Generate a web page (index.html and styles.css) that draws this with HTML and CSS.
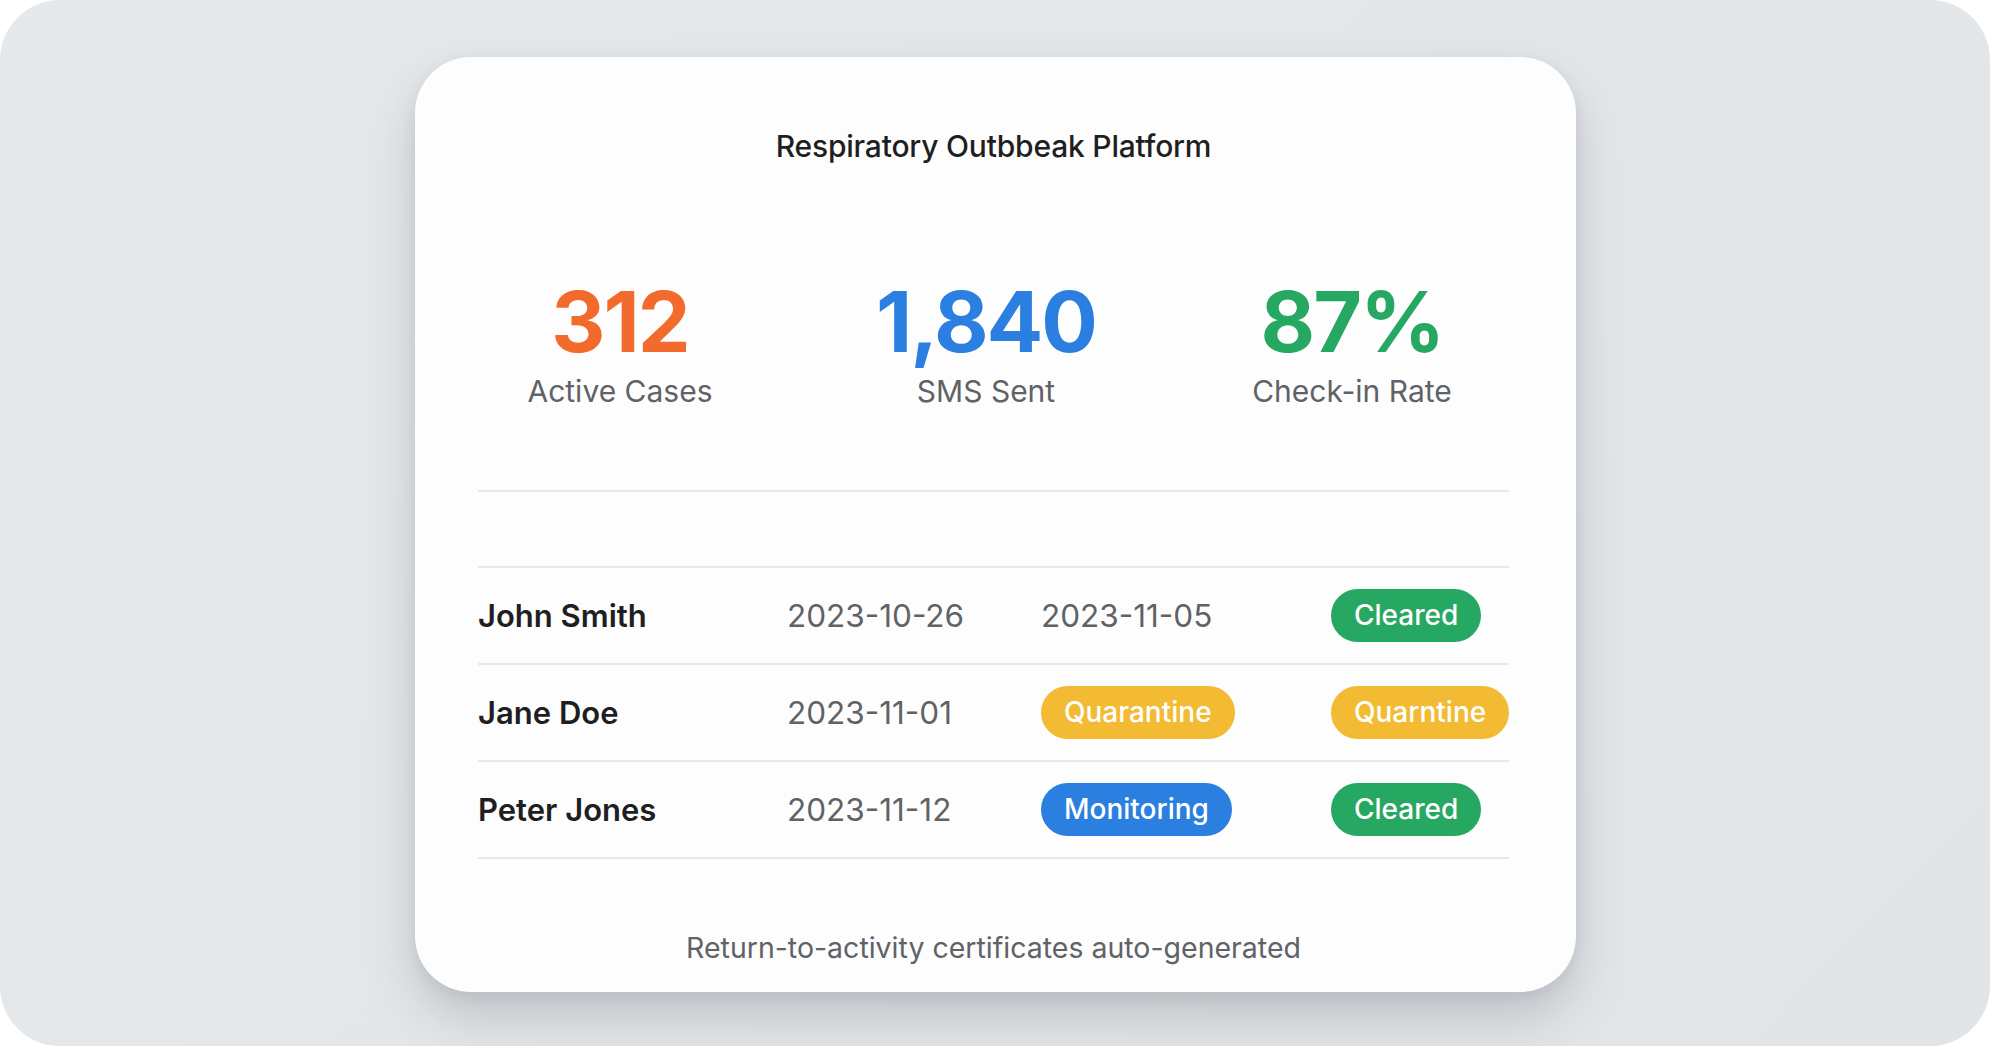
FILE: index.html
```html
<!DOCTYPE html>
<html lang="en">
<head>
    <meta charset="UTF-8">
    <meta name="viewport" content="width=device-width, initial-scale=1.0">
    <title>Respiratory Outbreak Platform</title>
    <link rel="stylesheet" href="styles.css">
</head>
<body>
    <div class="frame">
        <div class="card">
            <h1 class="title">Respiratory Outbbeak Platform</h1>

            <div class="stats">
                <div class="stat">
                    <div class="stat-value orange">312</div>
                    <div class="stat-label">Active Cases</div>
                </div>
                <div class="stat">
                    <div class="stat-value blue">1,840</div>
                    <div class="stat-label">SMS Sent</div>
                </div>
                <div class="stat">
                    <div class="stat-value green">87%</div>
                    <div class="stat-label">Check-in Rate</div>
                </div>
            </div>

            <div class="table">
                <div class="row head"></div>
                <div class="row">
                    <div class="name">John Smith</div>
                    <div class="date">2023-10-26</div>
                    <div class="date">2023-11-05</div>
                    <div><span class="pill pill-green">Cleared</span></div>
                </div>
                <div class="row">
                    <div class="name">Jane Doe</div>
                    <div class="date">2023-11-01</div>
                    <div><span class="pill pill-yellow">Quarantine</span></div>
                    <div><span class="pill pill-yellow">Quarntine</span></div>
                </div>
                <div class="row">
                    <div class="name">Peter Jones</div>
                    <div class="date">2023-11-12</div>
                    <div><span class="pill pill-blue">Monitoring</span></div>
                    <div><span class="pill pill-green">Cleared</span></div>
                </div>
            </div>

            <p class="footnote">Return-to-activity certificates auto-generated</p>
        </div>
    </div>
</body>
</html>
```

FILE: styles.css
```css
:root {
    --frame-bg: #e3e6e9;
    --card-bg: #fdfdfd;
    --text-dark: #1f1f22;
    --text-muted: #5f6266;
    --line-color: #e6e8eb;
    --orange: #f26b2c;
    --blue: #2b7fe0;
    --green: #27a862;
    --yellow: #f2bb33;
}

body {
    margin: 0;
    background: #ffffff;
    font-family: 'Inter', 'Roboto', sans-serif;
    color: var(--text-dark);
}

.frame {
    width: 1990px;
    height: 1046px;
    box-sizing: border-box;
    border-radius: 60px;
    background: linear-gradient(135deg, #e6e9eb 0%, #e2e5e8 100%);
    display: flex;
    justify-content: center;
    align-items: flex-start;
    padding-top: 57px;
    padding-left: 1px;
}

.card {
    width: 1161px;
    height: 935px;
    box-sizing: border-box;
    background: var(--card-bg);
    border-radius: 56px;
    box-shadow: 0 26px 50px rgba(60, 70, 80, 0.22), 0 4px 14px rgba(60, 70, 80, 0.08);
    padding: 72px 67px 0 63px;
    display: flex;
    flex-direction: column;
}

.title {
    margin: 0;
    text-align: center;
    font-size: 30px;
    line-height: 34px;
    font-weight: 500;
    color: var(--text-dark);
    letter-spacing: -0.2px;
}

.stats {
    display: grid;
    grid-template-columns: repeat(3, 366px);
    margin: 117px 0 0 -41px;
}

.stat {
    text-align: center;
}

.stat-value {
    font-size: 84px;
    line-height: 84px;
    font-weight: 700;
    letter-spacing: -2px;
}

.stat-label {
    margin-top: 10px;
    font-size: 30px;
    line-height: 34px;
    color: var(--text-muted);
}

.orange { color: var(--orange); }
.blue { color: var(--blue); }
.green { color: var(--green); }

.table {
    margin-top: 82px;
    border-top: 2px solid var(--line-color);
}

.row {
    display: grid;
    grid-template-columns: 309px 254px 290px 1fr;
    align-items: center;
    height: 97px;
    box-sizing: border-box;
    border-bottom: 2px solid var(--line-color);
}

.row.head {
    height: 76px;
}

.name {
    font-size: 31px;
    font-weight: 600;
    color: var(--text-dark);
}

.date {
    font-size: 31.5px;
    color: var(--text-muted);
}

.pill {
    display: inline-block;
    padding: 0 23px;
    height: 53px;
    line-height: 53px;
    border-radius: 27px;
    color: #ffffff;
    font-size: 28px;
    font-weight: 500;
}

.pill-green { background: var(--green); }
.pill-yellow { background: var(--yellow); }
.pill-blue { background: var(--blue); }

.footnote {
    margin: 72px 0 0;
    text-align: center;
    font-size: 28.5px;
    line-height: 34px;
    color: var(--text-muted);
}
```
